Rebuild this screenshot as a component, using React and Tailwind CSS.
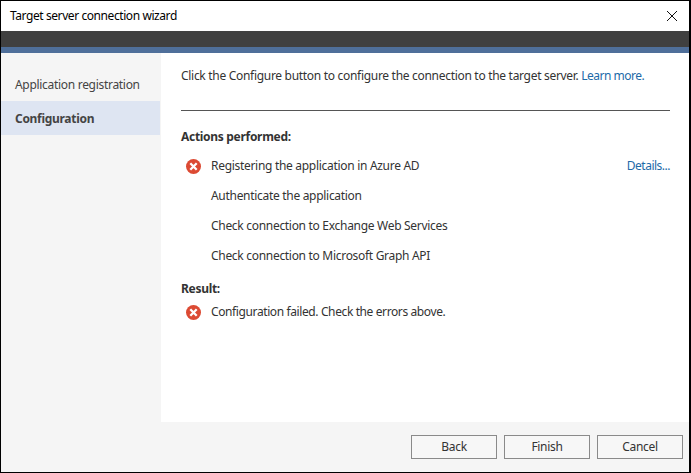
import React from 'react';

const ErrorIcon = () => (
    <svg width="15" height="15" viewBox="0 0 15 15" className="block">
        <circle cx="7.5" cy="7.5" r="7.5" fill="#dc4a33" />
        <path d="M4.3 4.3l6.4 6.4M10.7 4.3l-6.4 6.4" stroke="#fff" strokeWidth="2.3" />
    </svg>
);

const Step = ({ failed, children, right }) => (
    <div className="h-[30px] flex items-center">
        <div className="w-[30px] pl-[5px]">{failed && <ErrorIcon />}</div>
        <div className="flex-1">{children}</div>
        {right}
    </div>
);

const Button = ({ children }) => (
    <button className="w-[86px] h-[24px] border border-[#8a8a8a] bg-[#f7f7f7] text-[#333] text-[12px] tracking-[-0.3px]">{children}</button>
);

export default function App() {
    return (
        <div className="w-[691px] h-[473px] border border-black border-r-2 bg-white flex flex-col text-[12px] tracking-[-0.3px] text-[#333] font-['Noto_Sans','Open_Sans',sans-serif] overflow-hidden">
            <div className="h-[30px] shrink-0 flex items-center justify-between pl-[9px] pr-[11px] text-black">
                <span className="tracking-[-0.42px]">Target server connection wizard</span>
                <svg width="12" height="12" viewBox="0 0 12 12">
                    <path d="M1 1l10 10M11 1L1 11" stroke="#111" strokeWidth="1" fill="none" />
                </svg>
            </div>
            <div className="h-[16px] shrink-0 bg-[#404040]"></div>
            <div className="h-[6px] shrink-0 bg-[#4f6f9a]"></div>
            <div className="flex-1 flex min-h-0">
                <div className="w-[160px] shrink-0 bg-[#f5f5f5] pt-[17px]">
                    <div className="h-[30px] flex items-center pl-[14px] text-[#444]">Application registration</div>
                    <div className="h-[34px] mt-[1px] pt-[2px] w-[159px] flex items-center pl-[14px] bg-[#dee5f2] font-bold text-[#444]">Configuration</div>
                </div>
                <div className="flex-1 pl-[20px] pr-[19px] pt-[14px]">
                    <div className="h-[18px] leading-[18px]">
                        Click the Configure button to configure the connection to the target server. <a className="text-[#1c6aa8] tracking-[-0.5px]">Learn more.</a>
                    </div>
                    <div className="mt-[25px] border-t border-[#555]"></div>
                    <div className="mt-[17px] h-[18px] leading-[18px] font-bold">Actions performed:</div>
                    <div className="mt-[5px]">
                        <Step failed right={<a className="text-[#1c6aa8] tracking-[-0.5px]">Details...</a>}>Registering the application in Azure AD</Step>
                        <Step>Authenticate the application</Step>
                        <Step>Check connection to Exchange Web Services</Step>
                        <Step>Check connection to Microsoft Graph API</Step>
                    </div>
                    <div className="mt-[9px] h-[18px] leading-[18px] font-bold">Result:</div>
                    <div className="-mt-[1px]">
                        <Step failed><span className="tracking-[-0.39px]">Configuration failed. Check the errors above.</span></Step>
                    </div>
                </div>
            </div>
            <div className="h-[50px] shrink-0 bg-[#f5f5f5] flex justify-end items-start gap-[7px] pt-[13px] pr-[6px]">
                <Button>Back</Button>
                <Button>Finish</Button>
                <Button>Cancel</Button>
            </div>
        </div>
    );
}
